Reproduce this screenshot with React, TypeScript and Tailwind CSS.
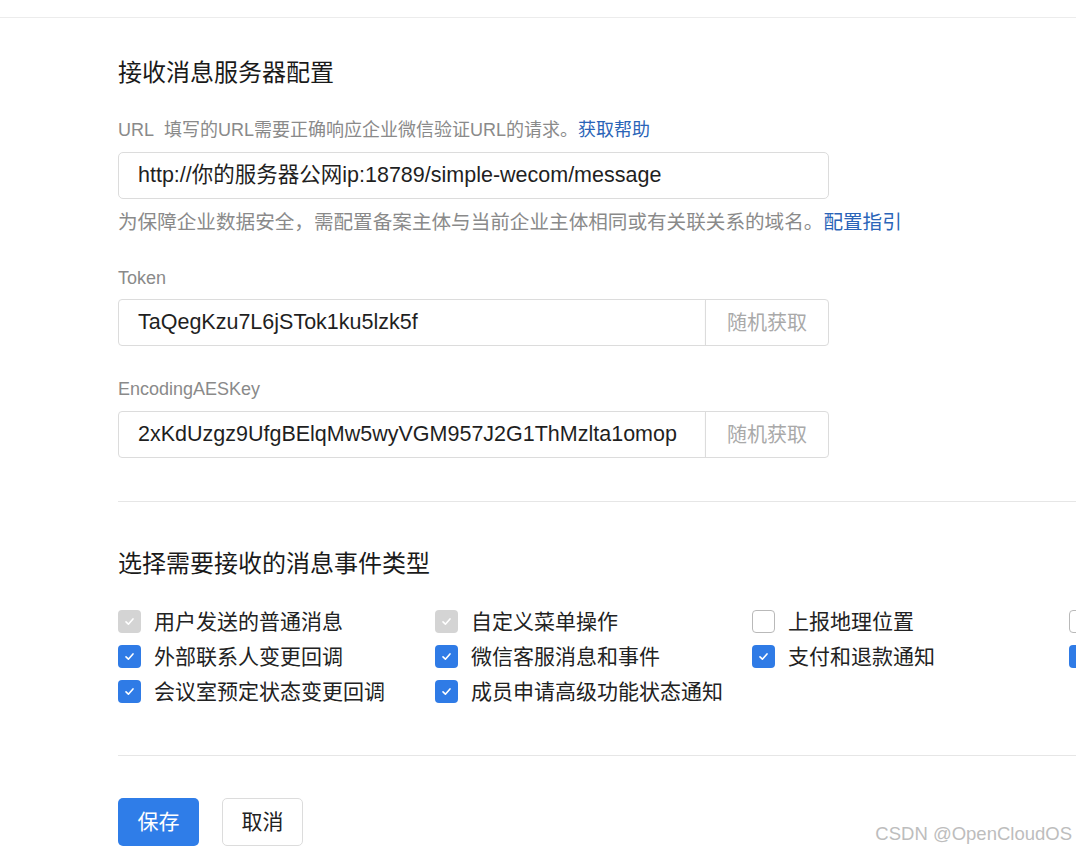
import React from "react";

const FONT = {
  fontFamily:
    '"Liberation Sans", "Noto Sans CJK SC", "Noto Sans", sans-serif',
};

function Check({ state }: { state: "on" | "off" | "disabled" }) {
  if (state === "off") {
    return (
      <span className="box-border inline-block h-[23px] w-[23px] shrink-0 rounded-[4px] border border-[#b9b9b9] bg-white" />
    );
  }
  const bg = state === "on" ? "bg-[#2f7be6]" : "bg-[#d4d4d4]";
  return (
    <span
      className={`flex h-[23px] w-[23px] shrink-0 items-center justify-center rounded-[4px] ${bg}`}
    >
      <svg width="13" height="13" viewBox="0 0 13 13" fill="none">
        <path
          d="M3 6.9 L5.4 9.2 L10 3.9"
          stroke="white"
          strokeWidth="1.6"
          strokeLinecap="round"
          strokeLinejoin="round"
        />
      </svg>
    </span>
  );
}

function Item({
  state,
  label,
}: {
  state: "on" | "off" | "disabled";
  label?: string;
}) {
  return (
    <div className="flex h-[35px] w-[317px] shrink-0 items-center gap-[13px]">
      <Check state={state} />
      {label ? (
        <span className="whitespace-nowrap text-[21px] text-[#222]">{label}</span>
      ) : null}
    </div>
  );
}

function KeyInput({ value }: { value: string }) {
  return (
    <div className="flex h-[47px] w-[711px] overflow-hidden rounded-[4px] border border-[#dcdcdc] bg-white">
      <div className="flex flex-1 items-center pl-[19px] text-[21.5px] text-[#1f1f1f]">
        {value}
      </div>
      <div className="flex w-[123px] items-center justify-center border-l border-[#dcdcdc] text-[20px] text-[#a9a9a9] shadow-[0_1px_1px_rgba(0,0,0,0.08)]">
        随机获取
      </div>
    </div>
  );
}

export default function App() {
  return (
    <div
      className="relative h-[854px] w-[1076px] overflow-hidden bg-white"
      style={FONT}
    >
      <div className="h-[18px] border-b border-[#ececec]" />
      <div className="pl-[118px]">
        <div className="mt-[39px] h-[32px] text-[24px] leading-[32px] text-[#1a1a1a]">
          接收消息服务器配置
        </div>

        <div className="mt-[28px] h-[26px] whitespace-nowrap text-[18px] leading-[26px] text-[#8a8a8a]">
          URL&nbsp;&nbsp;填写的URL需要正确响应企业微信验证URL的请求。
          <span className="text-[#2a64b8]">获取帮助</span>
        </div>

        <div className="mt-[9px] flex h-[47px] w-[711px] items-center rounded-[5px] border border-[#dcdcdc] pl-[19px] text-[21.5px] text-[#1f1f1f]">
          http://你的服务器公网ip:18789/simple-wecom/message
        </div>

        <div className="mt-[10px] h-[26px] whitespace-nowrap text-[19.6px] leading-[26px] text-[#8a8a8a]">
          为保障企业数据安全，需配置备案主体与当前企业主体相同或有关联关系的域名。
          <span className="text-[#2a64b8]">配置指引</span>
        </div>

        <div className="mt-[30px] h-[26px] text-[18px] leading-[26px] text-[#8a8a8a]">
          Token
        </div>
        <div className="mt-[8px]">
          <KeyInput value="TaQegKzu7L6jSTok1ku5lzk5f" />
        </div>

        <div className="mt-[30px] h-[26px] text-[18px] leading-[26px] text-[#8a8a8a]">
          EncodingAESKey
        </div>
        <div className="mt-[9px]">
          <KeyInput value="2xKdUzgz9UfgBElqMw5wyVGM957J2G1ThMzlta1omop" />
        </div>

        <div className="mt-[43px] border-t border-[#e6e6e6]" />

        <div className="mt-[46px] h-[32px] text-[24px] leading-[32px] text-[#1a1a1a]">
          选择需要接收的消息事件类型
        </div>

        <div className="mt-[24px] flex flex-col">
          <div className="flex">
            <Item state="disabled" label="用户发送的普通消息" />
            <Item state="disabled" label="自定义菜单操作" />
            <Item state="off" label="上报地理位置" />
            <Item state="off" />
          </div>
          <div className="flex">
            <Item state="on" label="外部联系人变更回调" />
            <Item state="on" label="微信客服消息和事件" />
            <Item state="on" label="支付和退款通知" />
            <Item state="on" />
          </div>
          <div className="flex">
            <Item state="on" label="会议室预定状态变更回调" />
            <Item state="on" label="成员申请高级功能状态通知" />
          </div>
        </div>

        <div className="mt-[46px] border-t border-[#e6e6e6]" />

        <div className="mt-[42px] flex gap-[23px]">
          <button className="flex h-[48px] w-[81px] items-center justify-center rounded-[5px] bg-[#2f7de8] text-[21px] text-white">
            保存
          </button>
          <button className="flex h-[48px] w-[81px] items-center justify-center rounded-[5px] border border-[#dcdcdc] bg-white text-[21px] text-[#222]">
            取消
          </button>
        </div>
      </div>

      <div className="absolute bottom-[6px] right-[4px] text-[18.5px] text-[#bdbdbd]">
        CSDN @OpenCloudOS
      </div>
    </div>
  );
}
